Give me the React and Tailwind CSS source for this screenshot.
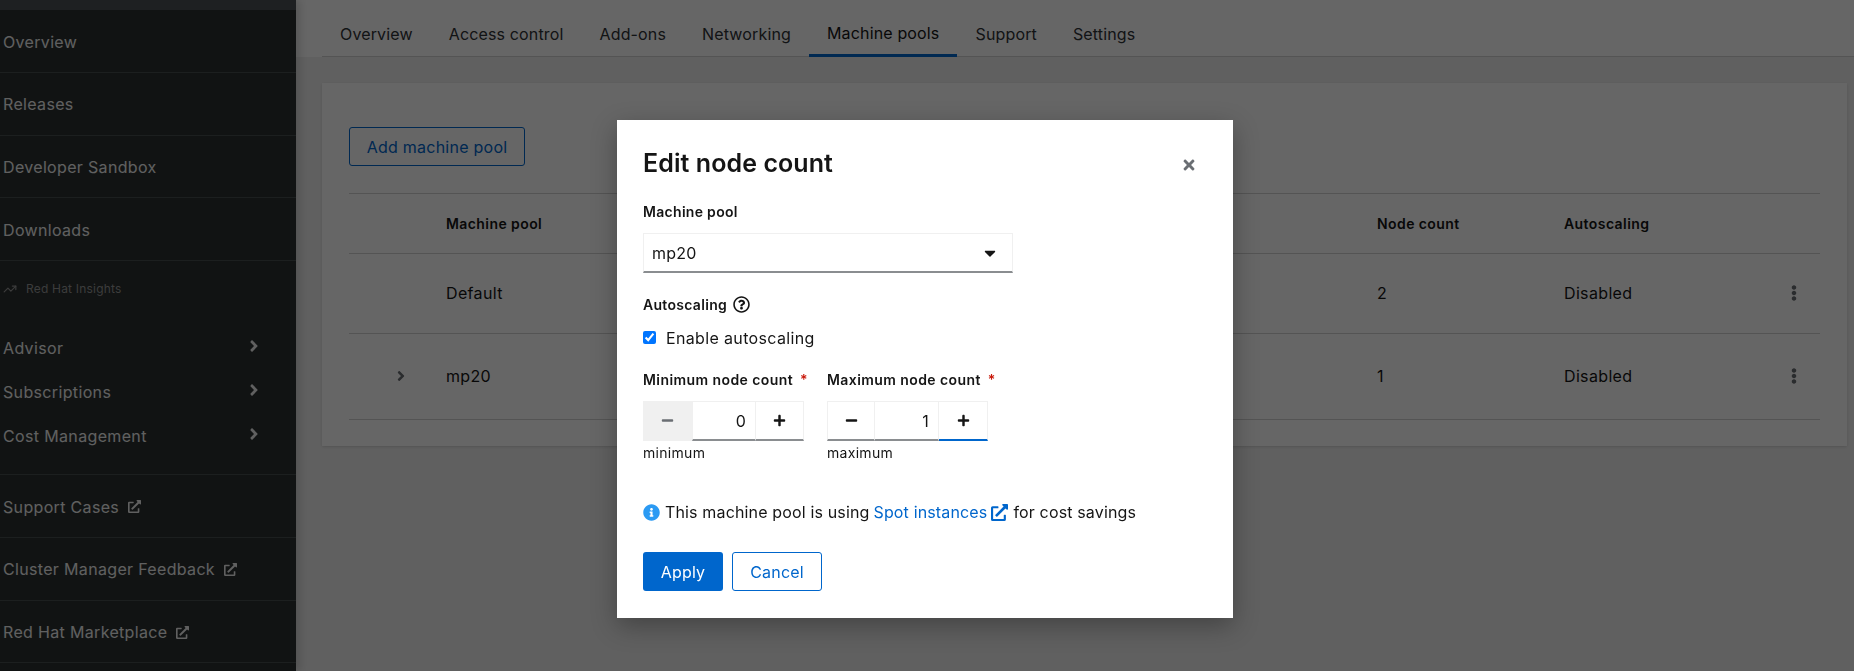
import React from "react";
import { FaAngleRight, FaExternalLinkAlt, FaTimes, FaEllipsisV, FaMinus, FaPlus, FaInfoCircle, FaCaretDown, FaRegQuestionCircle } from "react-icons/fa";
import { TrendingUp } from "lucide-react";

const tabs = ["Overview", "Access control", "Add-ons", "Networking", "Machine pools", "Support", "Settings"];

function NavLink({ label, ext }) {
  return (
    <div className="h-[62.75px] flex items-center pl-[3px] pt-[1.5px] border-b border-[#484e4e] text-[#f0f0f0] gap-2 tracking-[0.33px]">
      <span>{label}</span>
      {ext && <FaExternalLinkAlt className="w-[13px] h-[13px] ml-[1px]" />}
    </div>
  );
}

function Expand({ label }) {
  return (
    <div className="h-[44px] flex items-center justify-between pl-[3px] pr-[35px] text-[#f0f0f0] tracking-[0.35px]">
      <span>{label}</span>
      <FaAngleRight className="w-[14px] h-[18px] -mt-[4px]" />
    </div>
  );
}

function Stepper({ value, lw, mw, rw, disabled, focus, label, note }) {
  return (
    <div className="flex flex-col w-[161px]">
      <div className="h-[21px] flex items-center text-[14px] font-semibold text-[#151515] tracking-[0.42px] whitespace-nowrap">
        {label}<span className="text-[#c9190b] ml-[7px]">*</span>
      </div>
      <div className="flex h-[40px] mt-[11px] w-[161px]">
        <div className={`flex items-center justify-center border-b-2 border-[#8a8d90] ${disabled ? "bg-[#f0f0f0] border-[#f0f0f0] text-[#6a6e73]" : "border-t border-l border-t-[#f0f0f0] border-l-[#f0f0f0] text-[#151515]"}`} style={{ width: lw }}>
          <FaMinus className="w-[13px] h-[13px]" />
        </div>
        <div className="flex items-center justify-end pr-[9px] border-t border-x border-x-[#f0f0f0] border-t-[#f0f0f0] border-b-2 border-b-[#8a8d90] text-[#151515]" style={{ width: mw }}>{value}</div>
        <div className={`flex items-center justify-center border-t border-r border-t-[#f0f0f0] border-r-[#f0f0f0] border-b-2 text-[#151515] ${focus ? "border-b-[#0066cc]" : "border-b-[#8a8d90]"}`} style={{ width: rw }}>
          <FaPlus className="w-[13px] h-[13px]" />
        </div>
      </div>
      <div className="text-[14px] text-[#151515] mt-[1px] h-[21px] flex items-center tracking-[0.3px]">{note}</div>
    </div>
  );
}

function Row({ h, name, chevron, count }) {
  return (
    <div className="flex items-center border-b border-[#d2d2d2] text-[#151515] tracking-[0.35px] pb-[2px]" style={{ height: h }}>
      <div className="w-[97px] flex justify-end pr-[39px]">
        {chevron && <FaAngleRight className="w-[12px] h-[16px] text-[#6a6e73]" />}
      </div>
      <div className="w-[931px]">{name}</div>
      <div className="w-[187px]">{count}</div>
      <div className="flex-1">Disabled</div>
      <FaEllipsisV className="w-[14px] h-[16px] text-[#6a6e73] mr-[19px]" />
    </div>
  );
}

export default function App() {
  return (
    <div className="h-screen w-full overflow-hidden flex bg-[#f0f0f0] text-[16px] tracking-[0.2px] relative" style={{ fontFamily: "Inter, 'Noto Sans', sans-serif" }}>
      <aside className="w-[296px] shrink-0 bg-[#2b3030] flex flex-col shadow-[4px_0_8px_rgba(0,0,0,0.15)] z-10">
        <div className="h-[10px] bg-[#4d5055] shrink-0" />
        <NavLink label="Overview" />
        <NavLink label="Releases" />
        <NavLink label="Developer Sandbox" />
        <NavLink label="Downloads" />
        <div className="h-[53px] flex items-center pl-[3px] pt-[2px] text-[12px] text-[#969696] gap-[9px] shrink-0 tracking-[0.2px]">
          <TrendingUp className="w-[14px] h-[14px]" />
          <span>Red Hat Insights</span>
        </div>
        <div className="pt-[12px] pb-[16px] border-b border-[#484e4e]">
          <Expand label="Advisor" />
          <Expand label="Subscriptions" />
          <Expand label="Cost Management" />
        </div>
        <NavLink label="Support Cases" ext />
        <NavLink label="Cluster Manager Feedback" ext />
        <NavLink label="Red Hat Marketplace" ext />
      </aside>

      <main className="flex-1 flex flex-col min-w-0">
        <div className="bg-white h-[57px] pl-[26px] shrink-0">
          <div className="h-full flex border-b border-[#d2d2d2]">
            {tabs.map((t) => (
              <div key={t} className={`h-[57px] flex items-center pt-[11px] px-[18px] tracking-[0.15px] ${t === "Machine pools" ? "text-[#151515] border-b-[3px] border-[#0066cc]" : "text-[#2f3236]"}`}>{t}</div>
            ))}
          </div>
        </div>
        <div className="pt-[26px] pl-[26px] pr-[7px]">
          <div className="bg-white shadow-sm h-[363px] pt-[44px] px-[27px]">
            <button className="h-[39px] w-[176px] border border-[#0066cc] rounded-[3px] text-[#0066cc] tracking-[0.25px]">Add machine pool</button>
            <div className="mt-[27px] border-t border-[#d2d2d2]">
              <div className="h-[60px] flex items-center border-b border-[#d2d2d2] text-[14px] font-semibold text-[#151515] tracking-[0.42px]">
                <div className="w-[97px]" />
                <div className="w-[931px]">Machine pool</div>
                <div className="w-[187px]">Node count</div>
                <div>Autoscaling</div>
              </div>
              <Row h={80} name="Default" count="2" />
              <Row h={86} name="mp20" chevron count="1" />
            </div>
          </div>
        </div>
      </main>

      <div className="fixed inset-0 bg-black/60 z-20" />

      <div className="absolute z-30 left-[617px] top-[120px] w-[616px] h-[498px] bg-white shadow-[0_8px_24px_rgba(0,0,0,0.3)] px-[26px] pt-[24px]">
        <div className="flex items-center justify-between h-[38px]">
          <h1 className="text-[25px] font-semibold text-[#151515] tracking-[0.08px] pt-[1px]">Edit node count</h1>
          <FaTimes className="w-[14px] h-[16px] text-[#6a6e73] mr-[11px] mt-[3px]" />
        </div>
        <div className="mt-[19px] h-[21px] flex items-center text-[14px] font-semibold text-[#151515] tracking-[0.3px]">Machine pool</div>
        <div className="mt-[11px] w-[370px] h-[40px] flex items-center justify-between pl-[8px] pr-[16px] border border-[#f0f0f0] border-b-2 border-b-[#8a8d90] text-[#151515]">
          <span>mp20</span>
          <FaCaretDown className="w-[12px] h-[18px]" />
        </div>
        <div className="mt-[21px] h-[20px] flex items-center gap-[6px] text-[14px] font-semibold text-[#151515] tracking-[0.3px]">
          Autoscaling
          <FaRegQuestionCircle className="w-[17px] h-[17px]" />
        </div>
        <label className="mt-[13px] h-[21px] flex items-center gap-[10px] text-[#151515] tracking-[0.35px]">
          <input type="checkbox" defaultChecked className="w-[13px] h-[13px] accent-[#0075ff]" />
          <span>Enable autoscaling</span>
        </label>
        <div className="mt-[21px] flex gap-[23px]">
          <Stepper label="Minimum node count" value="0" lw={49} mw={64} rw={48} disabled note="minimum" />
          <Stepper label="Maximum node count" value="1" lw={47} mw={65} rw={49} focus note="maximum" />
        </div>
        <div className="mt-[37px] h-[24px] flex items-center text-[#151515] tracking-[0.15px]">
          <FaInfoCircle className="w-[17px] h-[17px] text-[#2b9af3] mr-[5px]" />
          <span>This machine pool is using</span>
          <span className="text-[#0066cc] ml-[4px]">Spot instances</span>
          <FaExternalLinkAlt className="w-[17px] h-[17px] text-[#0066cc] ml-[4px] mr-[5px]" />
          <span>for cost savings</span>
        </div>
        <div className="mt-[28px] flex gap-[9px]">
          <button className="w-[80px] h-[39px] bg-[#0066cc] text-white rounded-[3px]">Apply</button>
          <button className="w-[90px] h-[39px] border border-[#0066cc] text-[#0066cc] rounded-[3px]">Cancel</button>
        </div>
      </div>
    </div>
  );
}
